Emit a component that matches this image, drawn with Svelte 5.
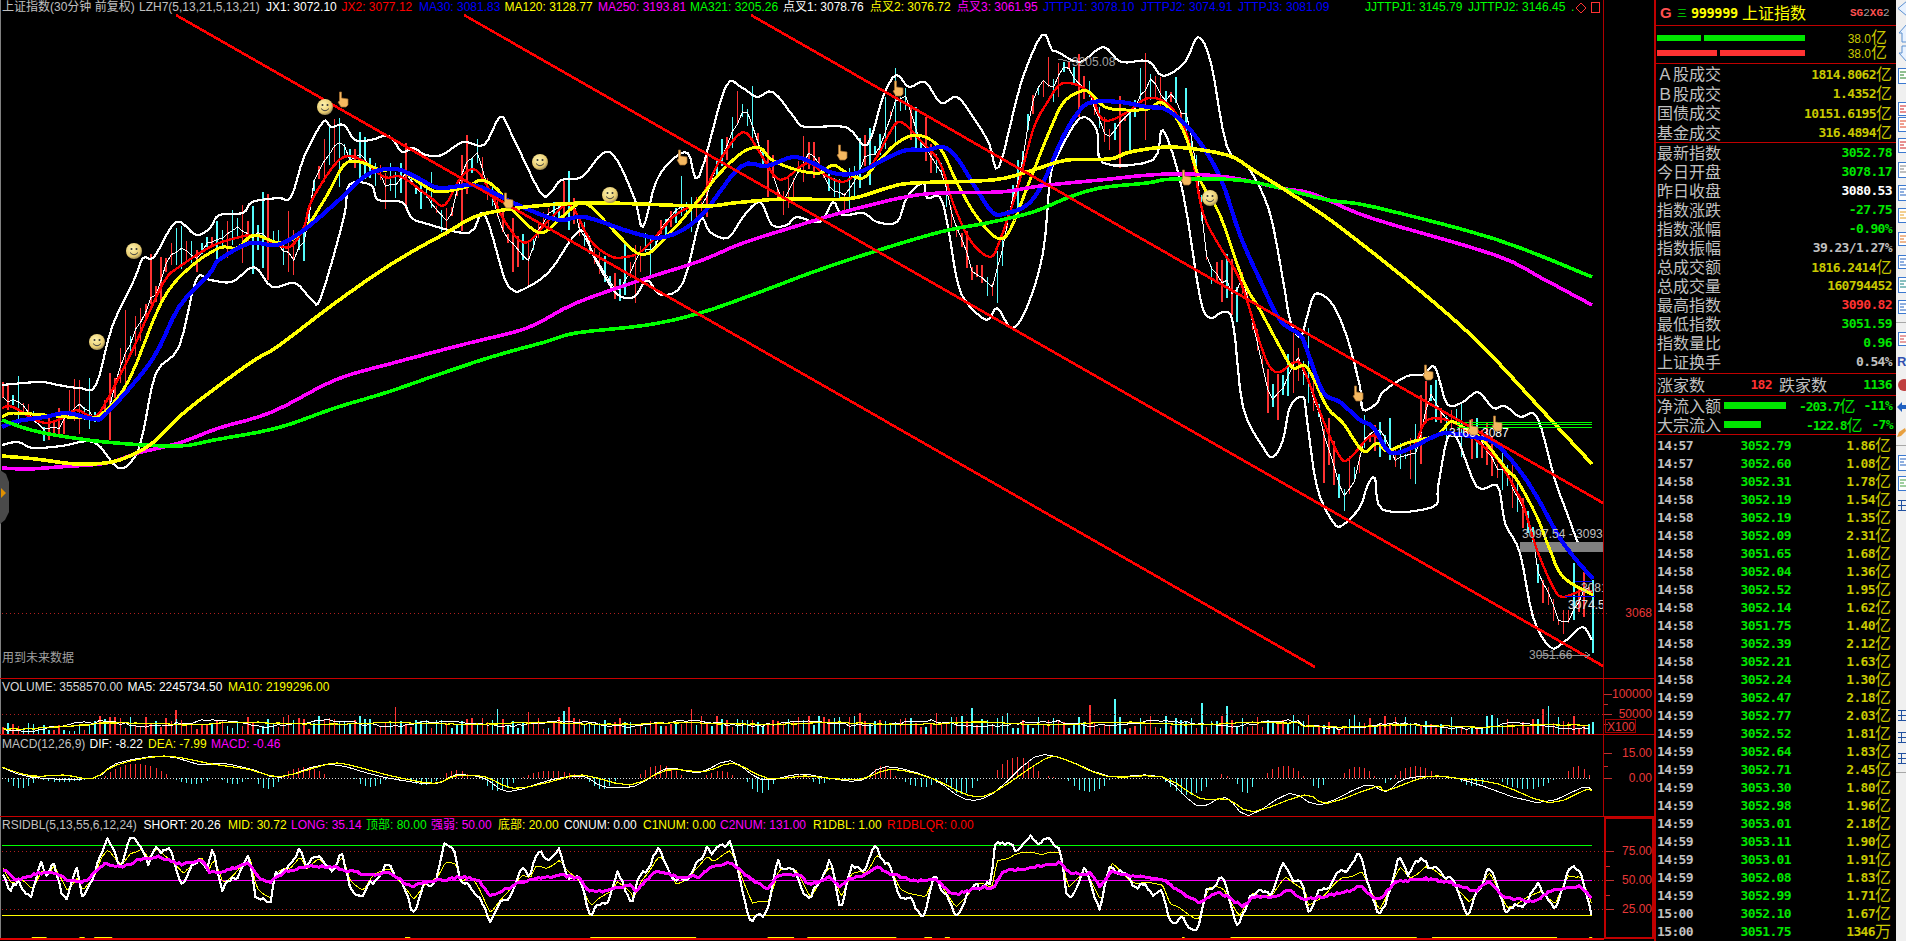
<script>
  function rng(seed) {
    let s = seed;
    return () => {
      s |= 0; s = (s + 0x6d2b79f5) | 0;
      let t = Math.imul(s ^ (s >>> 15), 1 | s);
      t = (t + Math.imul(t ^ (t >>> 7), 61 | t)) ^ t;
      return ((t ^ (t >>> 14)) >>> 0) / 4294967296;
    };
  }
  const R = rng(20240607);
  const line = (p) => p.map(([x, y]) => `${x.toFixed(1)},${y.toFixed(1)}`).join(' ');
  function smooth(pts, n = 4) {
    const out = [];
    for (let i = 0; i < pts.length - 1; i++) {
      const a = pts[Math.max(0, i - 1)], b = pts[i], c = pts[i + 1], d = pts[Math.min(pts.length - 1, i + 2)];
      for (let k = 0; k < n; k++) {
        const t = k / n, t2 = t * t, t3 = t2 * t;
        const f = (q) => 0.5 * (2 * b[q] + (c[q] - a[q]) * t + (2 * a[q] - 5 * b[q] + 4 * c[q] - d[q]) * t2 + (3 * b[q] - a[q] - 3 * c[q] + d[q]) * t3);
        out.push([f(0), f(1)]);
      }
    }
    out.push(pts[pts.length - 1]);
    return out;
  }
  function interp(pts, x) {
    if (x <= pts[0][0]) return pts[0][1];
    for (let i = 1; i < pts.length; i++) {
      if (x <= pts[i][0]) {
        const [x0, y0] = pts[i - 1], [x1, y1] = pts[i];
        return y0 + ((y1 - y0) * (x - x0)) / (x1 - x0 || 1);
      }
    }
    return pts[pts.length - 1][1];
  }

  const green = [[2,420],[31,430],[67,437],[116,443],[179,446],[214,440],[277,428],[335,408],[388,392],[437,375],[491,357],[545,342],[576,333],[647,325],[700,313],[760,292],[813,272],[873,252],[940,232],[987,223],[1033,212],[1067,198],[1100,188],[1147,183],[1173,179],[1238,180],[1280,188],[1328,200],[1374,207],[1495,239],[1592,277]];
  const magenta = [[2,468],[27,469],[58,467],[107,463],[138,453],[179,443],[219,428],[272,412],[335,380],[393,363],[469,343],[527,328],[576,303],[647,278],[700,261],[743,243],[800,225],[840,213],[900,198],[940,193],[1000,192],[1040,186],[1100,180],[1167,174],[1227,177],[1280,188],[1306,192],[1328,200],[1374,219],[1495,255],[1545,280],[1592,305]];
  const yellow = [[2,456],[36,459],[76,464],[112,462],[138,452],[156,440],[187,410],[250,363],[277,347],[335,303],[393,263],[446,233],[487,213],[580,203],[700,206],[733,203],[783,199],[847,199],[887,188],[913,183],[993,180],[1033,170],[1067,160],[1110,159],[1130,152],[1173,147],[1227,155],[1253,170],[1296,197],[1337,225],[1407,280],[1460,325],[1493,357],[1540,408],[1592,464]];
  const blue = [[2,427],[18,421],[45,417],[67,413],[94,419],[107,413],[152,360],[179,307],[210,273],[219,260],[250,243],[277,245],[304,230],[339,200],[360,180],[376,171],[397,169],[418,178],[439,188],[471,185],[492,192],[518,205],[558,220],[585,217],[634,233],[665,237],[700,217],[740,167],[767,166],[793,157],[813,163],[833,173],[857,173],[887,158],[907,150],[927,150],[943,147],[957,158],[977,190],[993,213],[1007,213],[1027,205],[1043,183],[1063,137],[1080,110],[1093,102],[1120,102],[1147,107],[1167,110],[1193,133],[1220,177],[1240,235],[1260,280],[1280,320],[1300,335],[1307,350],[1323,392],[1340,402],[1360,420],[1373,427],[1387,450],[1397,453],[1413,447],[1433,437],[1447,433],[1473,437],[1493,442],[1517,467],[1537,497],[1563,543],[1593,579]];
  const jy = [[2,417],[13,413],[45,415],[85,418],[103,413],[129,380],[161,303],[187,270],[219,248],[237,248],[254,235],[281,243],[304,230],[326,197],[344,165],[360,162],[381,170],[400,170],[423,185],[439,192],[466,187],[482,180],[498,190],[513,210],[540,233],[562,217],[585,203],[616,233],[643,255],[670,233],[700,198],[720,173],[743,152],[760,148],[772,160],[797,170],[820,173],[833,165],[847,173],[863,178],[877,163],[897,143],[918,135],[940,148],[957,183],[977,217],[997,238],[1010,230],[1030,180],[1050,130],[1063,103],[1079,92],[1089,92],[1105,107],[1126,110],[1148,109],[1163,103],[1183,130],[1200,180],[1220,215],[1243,280],[1260,310],[1280,347],[1293,368],[1307,367],[1327,407],[1343,423],[1363,451],[1377,443],[1387,451],[1407,443],[1437,435],[1450,422],[1463,427],[1483,440],[1507,470],[1517,480],[1537,517],[1550,550],[1563,577],[1593,595]];
  const jr = [[2,408],[13,407],[40,422],[58,420],[76,410],[94,417],[107,400],[134,347],[147,317],[165,280],[179,267],[210,247],[232,239],[254,235],[272,242],[290,247],[304,227],[312,200],[339,160],[360,159],[384,177],[402,177],[431,198],[445,205],[461,177],[476,170],[492,195],[504,220],[525,243],[549,220],[570,205],[590,240],[610,256],[625,257],[643,250],[670,220],[683,210],[700,200],[720,160],[743,132],[760,153],[780,180],[807,163],[825,175],[843,182],[857,173],[873,163],[893,127],[903,123],[920,140],[940,163],[953,203],[970,240],[990,257],[1000,240],[1017,190],[1033,130],[1047,103],[1063,83],[1089,92],[1103,120],[1126,113],[1148,98],[1169,105],[1185,130],[1193,160],[1203,213],[1220,247],[1240,280],[1260,343],[1270,367],[1280,372],[1293,363],[1303,368],[1323,420],[1340,457],[1350,458],[1373,435],[1390,452],[1413,447],[1427,420],[1453,422],[1473,437],[1490,453],[1500,463],[1520,498],[1527,517],[1537,550],[1553,587],[1563,597],[1583,590],[1593,592]];
  const upper = [[2,385],[40,382],[58,385],[80,388],[96,385],[112,327],[134,280],[143,258],[154,257],[176,222],[196,235],[210,228],[219,215],[243,213],[252,202],[278,198],[291,197],[304,157],[323,122],[331,127],[344,125],[355,140],[371,140],[389,136],[402,152],[413,148],[426,155],[442,155],[463,142],[484,145],[500,117],[511,133],[540,192],[551,192],[561,180],[582,177],[603,153],[617,160],[635,200],[643,227],[656,182],[672,160],[688,153],[699,177],[725,88],[741,87],[757,97],[773,92],[794,117],[805,127],[846,127],[867,145],[883,97],[896,75],[909,87],[925,82],[941,103],[957,97],[973,117],[989,143],[999,167],[1021,83],[1042,35],[1052,50],[1058,52],[1080,62],[1103,47],[1121,62],[1148,61],[1163,76],[1185,62],[1198,37],[1211,63],[1227,147],[1248,167],[1269,210],[1283,280],[1290,320],[1300,337],[1307,317],[1313,297],[1320,294],[1333,305],[1347,337],[1360,387],[1363,410],[1377,403],[1383,392],[1407,376],[1423,375],[1435,367],[1447,404],[1463,402],[1478,392],[1493,408],[1505,406],[1520,417],[1537,417],[1555,480],[1567,513],[1580,547],[1587,550],[1593,546]];
  const lower = [[2,445],[18,442],[33,448],[62,446],[94,442],[118,468],[134,458],[143,433],[156,373],[179,347],[196,280],[210,280],[232,282],[254,267],[272,287],[295,283],[312,300],[321,297],[344,217],[349,185],[371,185],[378,200],[402,202],[411,217],[424,223],[469,233],[484,213],[504,277],[513,290],[522,290],[549,272],[580,230],[594,257],[616,293],[634,297],[647,280],[661,295],[683,283],[700,220],[710,232],[728,238],[743,217],[760,202],[772,225],[787,225],[797,217],[820,222],[833,202],[842,215],[863,213],[877,222],[897,222],[907,197],[923,183],[927,198],[940,197],[948,227],[957,280],[967,303],[987,320],[997,308],[1012,328],[1027,307],[1043,253],[1050,180],[1057,157],[1080,118],[1097,130],[1103,163],[1153,160],[1163,130],[1183,193],[1200,297],[1210,318],[1223,312],[1233,323],[1243,407],[1263,447],[1273,457],[1283,440],[1290,407],[1303,397],[1307,420],[1317,487],[1333,522],[1343,525],[1360,507],[1367,487],[1375,478],[1383,510],[1433,507],[1438,487],[1447,440],[1457,438],[1477,487],[1497,485],[1503,513],[1507,528],[1520,553],[1533,617],[1550,647],[1563,643],[1582,627],[1592,640]];

  const step = 5.1;
  const xs = [];
  for (let x = 3; x <= 1593; x += step) xs.push(x);

  const thin = xs.map((x) => {
    const up = interp(upper, x), lo = interp(lower, x), mid = (up + lo) / 2, r = interp(jr, x - 3);
    const t = r + 1.3 * (r - mid) + (R() - 0.5) * 6;
    return [x, Math.min(lo - 2, Math.max(up + 2, t))];
  });
  let cRed = '', cCyan = '';
  thin.forEach(([x, c]) => {
    const up = interp(upper, x), lo = interp(lower, x);
    const h = 12 + R() * R() * 60;
    const top = Math.max(up - 8, c - h * R());
    const bot = Math.min(lo + 8, c + h * R());
    const seg = `M${x.toFixed(1)} ${top.toFixed(1)}V${bot.toFixed(1)}`;
    if (R() < 0.5) cRed += seg; else cCyan += seg;
  });
  cCyan += 'M1593 580V653';

  const trend = [[176, 15, 1315, 667], [464, 15, 1603, 666], [751, 15, 1603, 503]];

  const smileys = [[97,342],[134,251],[325,107],[540,162],[610,195],[1210,198]];
  const hands = [[343,99],[508,200],[682,157],[842,152],[898,88],[1186,177],[1358,393],[1428,372],[1473,427],[1497,423]];

  const titles = [
    [2,'上证指数(30分钟 前复权)','#c0c0c0'],[139,'LZH7(5,13,21,5,13,21)','#c0c0c0'],[266,'JX1: 3072.10','#ffffff'],[341.5,'JX2: 3077.12','#ff0000'],
    [419,'MA30: 3081.83','#0000ff'],[504.5,'MA120: 3128.77','#ffff00'],[598,'MA250: 3193.81','#ff00ff'],[690,'MA321: 3205.26','#00ff00'],
    [783,'点叉1: 3078.76','#ffffff'],[870,'点叉2: 3076.72','#ffff00'],[957,'点叉3: 3061.95','#ff00ff'],[1043,'JTTPJ1: 3078.10','#0000ff'],
    [1141,'JTTPJ2: 3074.91','#0000ff'],[1238,'JTTPJ3: 3081.09','#0000ff'],[1365,'JJTTPJ1: 3145.79','#00ff00'],[1468,'JJTTPJ2: 3146.45','#00ff00'],[1571,'.','#00ff00']
  ];

  // volume
  let vRed = '', vCyan = '';
  xs.forEach((x) => {
    let h = 5 + R() * 14;
    if (x < 95) h = 3 + R() * 10;
    if (R() < 0.05) h = 20 + R() * 8;
    const s = `M${x.toFixed(1)} 734V${(734 - h).toFixed(1)}`;
    if (R() < 0.5) vRed += s; else vCyan += s;
  });
  vRed += 'M1090 734V705M176 734V710';
  vCyan += 'M1115 734V699M1202 734V703M1593 734V722';
  const volBase = (x) => (x < 95 ? 729 - (x / 95) * 4 : x > 1300 ? 726 : 723.5);
  const vYellow = xs.map((x) => [x, volBase(x) + Math.sin(x / 23) * 1 + (R() - 0.5) * 1.2]);
  const vWhite = xs.map((x) => [x, volBase(x) + Math.sin(x / 19) * 2.5 + (R() - 0.5) * 3]);

  // macd
  const z5 = (a) => a.map(([x, y]) => [x / 1.889, 670 + y / 3]);
  const z12 = (a) => a.map(([x, y]) => [830 + x / 1.96, 670 + y / 3]);
  const dea = [...z5([[4,292],[60,318],[120,315],[175,325],[220,285],[310,258],[400,282],[470,298],[530,320],[620,282],[660,285],[740,318],[820,340],[860,318],[915,320],[970,355],[1040,335],[1100,315],[1190,345],[1260,300],[1330,305],[1385,280],[1450,325],[1520,318]]),
    ...z12([[0,325],[60,328],[120,298],[200,325],[270,375],[320,368],[420,268],[460,268],[545,320],[650,320],[725,385],[780,388],[830,425],[930,375],[975,400],[1070,350],[1090,362],[1170,320],[1230,325],[1310,342],[1410,398],[1480,360],[1493,363]])];
  const dif = [...z5([[4,292],[60,322],[175,325],[220,280],[310,258],[380,285],[420,280],[480,300],[530,322],[620,282],[720,320],[820,342],[860,315],[915,325],[960,365],[1040,330],[1100,318],[1140,350],[1200,348],[1260,295],[1320,308],[1380,272],[1440,330],[1510,312]]),
    ...z12([[0,325],[60,332],[110,290],[200,325],[265,388],[320,370],[400,262],[460,268],[545,318],[650,320],[720,408],[775,382],[820,437],[900,370],[960,405],[1050,345],[1090,365],[1130,325],[1230,325],[1385,398],[1475,352],[1493,362]])];
  const segsA = [[10,70,-10],[70,170,-4],[195,320,14],[330,400,-6],[415,470,-6],[480,530,-11],[530,620,11],[670,730,-9],[770,830,-7],[835,890,8],[910,975,-13],[985,1100,7],[1110,1165,-11],[1205,1290,13],[1330,1390,7],[1410,1465,-15],[1480,1530,3],[1530,1568,-6]].map(([a,b,c]) => [a/1.889,b/1.889,c]);
  const segsB = [[20,70,-2],[75,130,12],[140,220,-9],[225,290,-16],[320,415,21],[420,440,2],[465,550,-14],[655,750,-17],[760,780,4],[795,835,-15],[850,930,12],[940,975,-10],[1000,1070,11],[1080,1100,-5],[1105,1190,12],[1230,1290,-8],[1310,1420,-11],[1440,1490,12]].map(([a,b,c]) => [830+a/1.96,830+b/1.96,c]);
  let mRed = '', mCyan = '';
  xs.forEach((x) => {
    const s = [...segsA, ...segsB].find((g) => x >= g[0] && x <= g[1]);
    if (!s) return;
    const p = Math.pow(Math.sin((Math.PI * (x - s[0])) / (s[1] - s[0])), 0.7) * s[2];
    const d = `M${x.toFixed(1)} 778V${(778 - p).toFixed(1)}`;
    if (p > 0) mRed += d; else mCyan += d;
  });

  // rsi
  const rLong = [...z5([[4,595],[30,630],[70,610],[100,610],[130,630],[155,640],[200,580],[230,593],[270,565],[300,560],[345,585],[380,570],[395,605],[420,605],[470,580],[490,625],[510,635],[540,605],[575,590],[630,590],[650,600],[700,615],[735,605],[775,650],[810,635],[875,620],[905,630],[925,680],[945,665],[985,635],[1060,615],[1095,625],[1110,660],[1140,665],[1190,645],[1200,665],[1240,600],[1280,620],[1320,620],[1345,590],[1380,578],[1420,630],[1450,655],[1470,615],[1510,615],[1530,645]]),
    ...z12([[0,620],[20,650],[40,625],[70,615],[90,590],[115,610],[170,635],[205,625],[240,675],[300,650],[320,655],[340,605],[450,578],[470,608],[510,610],[530,650],[550,605],[600,620],[650,625],[680,660],[725,700],[760,665],[810,710],[830,680],[870,680],[900,660],[930,690],[1000,670],[1040,650],[1075,690],[1110,635],[1165,625],[1220,640],[1265,665],[1290,635],[1320,680],[1380,695],[1410,665],[1470,648],[1493,682]])];
  const rShort = [...z5([[4,590],[20,650],[35,630],[60,695],[78,580],[90,620],[100,575],[125,685],[145,605],[155,685],[175,640],[190,530],[203,500],[215,550],[228,590],[245,520],[265,510],[280,575],[295,520],[320,560],[345,640],[378,540],[390,610],[402,545],[420,670],[470,550],[482,680],[510,720],[520,600],[545,590],[565,525],[578,610],[600,550],[625,600],[645,540],[660,660],[685,695],[700,630],[735,580],[780,725],[800,640],[825,620],[840,540],[858,535],[870,640],[890,630],[925,760],[955,690],[985,590],[1000,620],[1010,565],[1030,570],[1055,530],[1070,600],[1095,640],[1115,740],[1150,670],[1165,610],[1195,710],[1210,620],[1245,525],[1275,655],[1300,625],[1335,520],[1345,555],[1378,520],[1395,600],[1420,755],[1450,730],[1470,580],[1500,590],[1530,705]]),
    ...z12([[0,565],[20,700],[40,605],[70,600],[90,520],[115,580],[135,680],[185,730],[205,600],[245,750],[285,625],[315,660],[325,515],[345,535],[395,500],[415,530],[450,520],[465,685],[500,610],[530,720],[550,565],[600,660],[650,650],[665,750],[720,785],[740,640],[770,635],[800,775],[825,655],[865,680],[890,580],[930,650],[935,730],[970,660],[1000,595],[1040,565],[1075,745],[1115,565],[1135,620],[1165,560],[1215,630],[1250,735],[1290,580],[1325,735],[1390,645],[1420,735],[1445,590],[1470,590],[1493,735]])];
  const rx = [];
  for (let x = 3; x <= 1592; x += 2.55) rx.push(x);
  const rsiWhite = rx.map((x) => {
    const base = interp(rShort, x);
    const k = Math.sin(x / 3.1) * 3 + Math.sin(x / 7.3) * 4 + (R() - 0.5) * 4;
    return [x, x > 1589 ? base : Math.min(930, base + k)];
  });
  const rsiLong = rx.map((x) => [x, interp(rLong, x) + (R() - 0.5) * 2.4]);
  const rMid = rx.map((x) => {
    const l = interp(rLong, x), s = interp(rShort, x - 1);
    return [x, l + 0.55 * (s - l) + Math.sin(x / 5.1) * 1.5];
  });
  const bottomY = [[60,88],[150,160],[178,212],[765,775],[1115,1315],[1450,1500],[1525,1568]].map(([a,b]) => [a/1.889,b/1.889])
    .concat([[0,130],[185,200],[225,235],[690,695],[785,1150],[1180,1425],[1488,1494]].map(([a,b]) => [830+a/1.96,830+b/1.96]));

  const rsiHead = [
    [2,'RSIDBL(5,13,55,6,12,24)','#c0c0c0'],[143.5,'SHORT: 20.26','#ffffff'],[228,'MID: 30.72','#ffff00'],[291,'LONG: 35.14','#ff00ff'],
    [366,'顶部: 80.00','#00ff00'],[431,'强弱: 50.00','#ff00ff'],[498,'底部: 20.00','#ffff00'],[564,'C0NUM: 0.00','#ffffff'],
    [643,'C1NUM: 0.00','#ffff00'],[720,'C2NUM: 131.00','#ff00ff'],[813,'R1DBL: 1.00','#ffff00'],[887,'R1DBLQR: 0.00','#ff0000']
  ];

  const turnover = [['Ａ股成交','1814.8062'],['Ｂ股成交','1.4352'],['国债成交','10151.6195'],['基金成交','316.4894']];
  const stats = [
    ['最新指数','3052.78','g'],['今日开盘','3078.17','g'],['昨日收盘','3080.53','w'],['指数涨跌','-27.75','g'],['指数涨幅','-0.90%','g'],['指数振幅','39.23/1.27%','n'],
    ['总成交额','1816.2414','y','亿'],['总成交量','160794452','y'],['最高指数','3090.82','r'],['最低指数','3051.59','g'],['指数量比','0.96','g'],['上证换手','0.54%','n']
  ];
  const ticks = [
    ['14:57','3052.79','1.86'],['14:57','3052.60','1.08'],['14:58','3052.31','1.78'],['14:58','3052.19','1.54'],['14:58','3052.19','1.35'],['14:58','3052.09','2.31'],['14:58','3051.65','1.68'],
    ['14:58','3052.04','1.36'],['14:58','3052.52','1.95'],['14:58','3052.14','1.62'],['14:58','3051.75','1.40'],['14:58','3052.39','2.12'],['14:58','3052.21','1.63'],['14:58','3052.24','1.30'],
    ['14:59','3052.47','2.18'],['14:59','3052.77','2.03'],['14:59','3052.52','1.81'],['14:59','3052.64','1.83'],['14:59','3052.71','2.45'],['14:59','3053.30','1.80'],['14:59','3052.98','1.96'],
    ['14:59','3053.01','2.18'],['14:59','3053.11','1.90'],['14:59','3053.01','1.91'],['14:59','3052.08','1.83'],['14:59','3052.99','1.71'],['15:00','3052.10','1.67'],['15:00','3051.75','1346','万']
  ];
  const tbBoxes = [[68,15,'#208020'],[102,13,'#d02020'],[117,14,'#e04020'],[138,14,'#d02020'],[162,15,'#808080'],[185,15,'#2060c0'],[208,14,'#e8a020'],[232,13,'#e07020'],[255,13,'#2060c0'],[277,15,'#108080'],[300,13,'#2060c0'],[332,13,'#d04040'],[455,15,'#2060c0'],[476,14,'#40a040']];
  const tbGlyphs = [505,715,737,758];
</script>

{#snippet axisV()}
  <line class="ax" x1="1603.5" y1="0" x2="1603.5" y2="941" />
  <rect class="axr" x="1654" y="0" width="2" height="941" />
{/snippet}

<div class="app">
  <div class="charts">
    <div class="pane main">
      <svg width="1656" height="678" viewBox="0 0 1656 678">
        <defs>
          <radialGradient id="smile" cx="0.4" cy="0.35" r="0.7">
            <stop offset="0" stop-color="#fff4b0" />
            <stop offset="0.7" stop-color="#e8cc70" />
            <stop offset="1" stop-color="#8a7a50" />
          </radialGradient>
          <symbol id="hand" viewBox="0 0 12 17">
            <path d="M2.5 1 L4.5 1 L4.5 7 L11 8 L11 14 L9 16 L4 16 L1 11 L2.5 10 Z" fill="#f4b860" stroke="#a87030" stroke-width="0.7" />
          </symbol>
          <clipPath id="clip-main"><rect x="0" y="0" width="1603" height="678" /></clipPath>
        </defs>

        <line class="dot" x1="2" y1="613.5" x2="1609" y2="613.5" />
        <path class="cand red" d={cRed} />
        <path class="cand cyan" d={cCyan} />
        <polyline class="l thin" points={line(thin)} />
        <polyline class="l w2" points={line(smooth(upper))} />
        <polyline class="l w2" points={line(smooth(lower))} />

        <rect x="1520" y="542" width="83" height="10" fill="#808080" />
        <polyline class="l red2" points={line(smooth(jr))} />
        <polyline class="l yel" points={line(smooth(jy))} />
        <polyline class="l blu" points={line(smooth(blue))} />
        <polyline class="l ma mag" points={line(smooth(magenta))} />
        <polyline class="l ma gre" points={line(smooth(green))} />
        <polyline class="l ma y3" points={line(smooth(yellow))} />

        <g class="greens">
          <line x1="1457" y1="422.5" x2="1592" y2="422.5" />
          <line x1="1457" y1="424.5" x2="1592" y2="424.5" />
          <line x1="1457" y1="427" x2="1592" y2="427" />
        </g>
        <text class="t" x="1449" y="437" fill="#ffffff">3166</text>
        <text class="t" x="1482" y="437" fill="#ffffff">3087</text>

        {#each trend as t}
          <line class="trend" x1={t[0]} y1={t[1]} x2={t[2]} y2={t[3]} />
        {/each}

        <line class="blue1" x1="1575" y1="581.5" x2="1592" y2="581.5" />
        <line class="blue1" x1="1565" y1="596.5" x2="1595" y2="596.5" />
        <path class="gline" d="M1058 59 L1072 62 M1537 655 H1590 M1585 652 L1590 655 L1585 658" />
        <text class="t" x="1072" y="66" fill="#a0a0a0">3205.08</text>
        <text class="t" x="1522" y="538" fill="#c0c0c0" clip-path="url(#clip-main)">3097.54 - 3093</text>
        <text class="t" x="1581" y="592" fill="#c0c0c0" clip-path="url(#clip-main)">3081</text>
        <text class="t" x="1568" y="609" fill="#e0e0e0" clip-path="url(#clip-main)">3074.5</text>
        <text class="t" x="1529" y="659" fill="#a0a0a0">3051.66</text>

        {#each smileys as s}
          <g transform={`translate(${s[0]} ${s[1]})`}>
            <circle r="8" fill="url(#smile)" />
            <circle cx="-2.5" cy="-2" r="1" fill="#333" />
            <circle cx="2.5" cy="-2" r="1" fill="#333" />
            <path d="M-4 1.5 Q0 6 4 1.5" fill="none" stroke="#444" stroke-width="1" />
          </g>
        {/each}
        {#each hands as h}
          <use href="#hand" x={h[0] - 6} y={h[1] - 8} width="12" height="17" />
        {/each}

        <rect x="0" y="0" width="1" height="678" fill="#808080" />
        {#each titles as t}
          <text class="t" x={t[0]} y="11" fill={t[2]}>{t[1]}</text>
        {/each}
        <path d="M1581 3 L1586 8 L1581 13 L1576 8 Z" fill="none" stroke="#ff3232" />
        <rect x="1591.5" y="2.5" width="8" height="10" fill="none" stroke="#ff3232" />

        <text class="t" x="2" y="662" fill="#a0a0a0">用到未来数据</text>
        <text class="ay" x="1652" y="617" text-anchor="end">3068</text>

        <path d="M0 470 L6 474 L9 482 L9 512 L5 520 L0 524 Z" fill="#4a4a4a" />
        <path d="M1 488 L6 493 L1 498 Z" fill="#e09000" />
        {@render axisV()}
      </svg>
    </div>

    <div class="pane vol">
      <svg width="1656" height="55" viewBox="0 679 1656 55">
        <rect x="0" y="679" width="1" height="55" fill="#808080" />
        <path class="cand red" d={vRed} />
        <path class="cand cyan" d={vCyan} />
        <line class="dot" x1="2" y1="714.5" x2="1609" y2="714.5" />
        <polyline class="l thin" points={line(vWhite)} />
        <polyline class="l y15" points={line(vYellow)} />
        <text class="t" x="2" y="691" fill="#d8d8d8">VOLUME: 3558570.00</text>
        <text class="t" x="127.6" y="691" fill="#ffffff">MA5: 2245734.50</text>
        <text class="t" x="228" y="691" fill="#ffff00">MA10: 2199296.00</text>
        <path class="tk" d="M1604 694.5H1612M1604 704.5H1608M1604 714.5H1612M1604 724.5H1608" />
        <text class="ay" x="1652" y="698" text-anchor="end">100000</text>
        <text class="ay" x="1652" y="718" text-anchor="end">50000</text>
        <rect class="box" x="1605.5" y="719.5" width="30" height="13" />
        <text class="ay" x="1607" y="731">X100</text>
        {@render axisV()}
      </svg>
    </div>

    <div class="pane macd">
      <svg width="1656" height="81" viewBox="0 735 1656 81">
        <rect x="0" y="735" width="1" height="81" fill="#808080" />
        <path class="bar red" d={mRed} />
        <path class="bar cyan" d={mCyan} />
        <line class="dotw" x1="2" y1="778.5" x2="1592" y2="778.5" />
        <polyline class="l thin" points={line(smooth(dif, 3))} />
        <polyline class="l y15" points={line(smooth(dea, 3))} />
        <text class="t" x="2" y="748" fill="#c0c0c0">MACD(12,26,9)</text>
        <text class="t" x="89.5" y="748" fill="#ffffff">DIF: -8.22</text>
        <text class="t" x="148" y="748" fill="#ffff00">DEA: -7.99</text>
        <text class="t" x="211" y="748" fill="#ff00ff">MACD: -0.46</text>
        <path class="tk" d="M1604 753.5H1612M1604 766.5H1608M1604 778.5H1612" />
        <text class="ay" x="1652" y="757" text-anchor="end">15.00</text>
        <text class="ay" x="1652" y="782" text-anchor="end">0.00</text>
        {@render axisV()}
      </svg>
    </div>

    <div class="pane rsi">
      <svg width="1656" height="124" viewBox="0 817 1656 124">
        <rect x="0" y="817" width="1" height="121" fill="#808080" />
        <line class="dot" x1="2" y1="851.5" x2="1609" y2="851.5" />
        <line class="dot" x1="2" y1="880.5" x2="1609" y2="880.5" />
        <line class="dot" x1="2" y1="909.5" x2="1609" y2="909.5" />
        <line class="flat g" x1="2" y1="845.5" x2="1592" y2="845.5" />
        <line class="flat m" x1="2" y1="880.5" x2="1592" y2="880.5" />
        <line class="flat y" x1="2" y1="915.5" x2="1592" y2="915.5" />
        <polyline class="l thiny" points={line(rMid)} />
        <polyline class="l w2" points={line(rsiWhite)} />
        <polyline class="l mag25" points={line(rsiLong)} />
        {#each rsiHead as t}
          <text class="t" x={t[0]} y="829" fill={t[2]}>{t[1]}</text>
        {/each}
        {#each bottomY as b}
          <rect x={b[0]} y="937" width={b[1] - b[0]} height="1" fill="#ffff00" />
        {/each}
        <rect x="0" y="938" width="1604" height="2" fill="#e00000" />
        <rect x="1605" y="818" width="48" height="120" class="thick" />
        <path class="tk" d="M1606 851.5H1614M1606 866.5H1610M1606 880.5H1614M1606 895.5H1610M1606 909.5H1614" />
        <text class="ay" x="1652" y="855" text-anchor="end">75.00</text>
        <text class="ay" x="1652" y="884" text-anchor="end">50.00</text>
        <text class="ay" x="1652" y="913" text-anchor="end">25.00</text>
        <rect class="axr" x="1654" y="817" width="2" height="124" />
      </svg>
    </div>
  </div>

  <aside class="panel">
    <header class="sec head">
      <span class="g">G</span>
      <span class="san">三</span>
      <span class="code">999999</span>
      <span class="name">上证指数</span>
      <span class="sg"><b>SG</b><i>2</i><b>XG</b><i>2</i></span>
    </header>

    <section class="sec bars">
      <div class="barrow">
        <span class="bb gb b1"></span><span class="bb gb b2"></span>
        <span class="amt">38.0<em>亿</em></span>
      </div>
      <div class="barrow">
        <span class="bb rb b3"></span><span class="bb rb b4"></span>
        <span class="amt">38.0<em>亿</em></span>
      </div>
    </section>

    <section class="sec turn">
      {#each turnover as r}
        <div class="row r195"><span class="lab">{r[0]}</span><span class="val y">{r[1]}<em>亿</em></span></div>
      {/each}
    </section>

    <section class="sec stat">
      {#each stats as r}
        <div class="row r19">
          <span class="lab">{r[0]}</span>
          <span class="val {r[2]}">{r[1]}{#if r[3]}<em>{r[3]}</em>{/if}</span>
        </div>
      {/each}
    </section>

    <section class="sec counts">
      <span class="lab">涨家数</span>
      <span class="val r c182">182</span>
      <span class="lab c2">跌家数</span>
      <span class="val g c1136">1136</span>
    </section>

    <section class="sec flow">
      <div class="row r19">
        <span class="lab">净流入额</span>
        <span class="fb fb1"></span>
        <span class="val g fv fv1">-203.7<em>亿</em></span>
        <span class="val g fp1">-11%</span>
      </div>
      <div class="row r19">
        <span class="lab">大宗流入</span>
        <span class="fb fb2"></span>
        <span class="val g fv fv2">-122.8<em>亿</em></span>
        <span class="val g fp2">-7%</span>
      </div>
    </section>

    <section class="ticks">
      {#each ticks as t}
        <div class="tick">
          <span class="val n">{t[0]}</span>
          <span class="val g">{t[1]}</span>
          <span class="val y">{t[2]}<em>{t[3] ?? '亿'}</em></span>
        </div>
      {/each}
    </section>
  </aside>

  <div class="toolbar">
    <svg width="10" height="941" viewBox="0 0 10 941">
      <path class="ti" d="M11 1 L2 8.5 L11 16" />
      <path class="ti" d="M11 24 L3 33 H6 V42 H11" />
      <path class="ti" d="M11 62 L3 53 H6 V46 H11" />
      {#each tbBoxes as b}
        <rect class="tb" x="2.5" y={b[0] + 0.5} width="14" height={b[1]} />
        <path d={`M4 ${b[0] + 4}H10M4 ${b[0] + 7}H8M4 ${b[0] + 10}H10`} stroke={b[2]} fill="none" />
      {/each}
      {#each tbGlyphs as g}
        <path class="tg" d={`M2 ${g - 5}H10M5 ${g - 5}V${g + 5}M2 ${g}H10M2 ${g + 5}H10`} />
      {/each}
      <line class="sep" x1="0" y1="322.5" x2="10" y2="322.5" />
      <line class="sep" x1="0" y1="445.5" x2="10" y2="445.5" />
      <line class="sep" x1="0" y1="772.5" x2="10" y2="772.5" />
      <text class="tr" x="1" y="366">R</text>
      <circle cx="8" cy="385" r="6" fill="#c04040" />
      <path d="M1 407 L6 402 V405 H10 V409 H6 V412 Z" fill="#2060c0" />
      <path d="M1 437 L3 432 L9 428 L10 431 L5 436 Z" fill="#e8a040" />
    </svg>
  </div>
</div>

<style>
  :global(body) { margin: 0; background: #000; }
  .app { display: flex; width: 1906px; height: 941px; overflow: hidden; background: #000; }
  .charts { width: 1656px; flex: none; display: flex; flex-direction: column; }
  .pane { border-bottom: 1px solid #c80000; box-sizing: border-box; flex: none; }
  .pane svg { display: block; }
  .main { height: 679px; }
  .vol { height: 56px; }
  .macd { height: 82px; }
  .rsi { height: 124px; border-bottom: 0; }

  .t { font: 12px "Liberation Sans", "Noto Sans CJK SC", sans-serif; }
  .ay { font: 12px "Liberation Sans", sans-serif; fill: #e83838; }
  .l { fill: none; shape-rendering: crispEdges; stroke-linejoin: round; }
  .thin { stroke: #ffffff; stroke-width: 1; }
  .thiny { stroke: #ffff00; stroke-width: 1; }
  .w2 { stroke: #ffffff; stroke-width: 2.2; }
  .red2 { stroke: #ff0000; stroke-width: 2.4; }
  .yel { stroke: #ffff00; stroke-width: 3; }
  .blu { stroke: #0000ff; stroke-width: 4.2; }
  .ma { stroke-width: 3.6; }
  .mag { stroke: #ff00ff; }
  .gre { stroke: #00ff00; }
  .y3 { stroke: #ffff00; }
  .y15 { stroke: #ffff00; stroke-width: 1.2; }
  .mag25 { stroke: #ff00ff; stroke-width: 3; }
  .cand { fill: none; stroke-width: 1.5; shape-rendering: crispEdges; }
  .bar { fill: none; stroke-width: 1; shape-rendering: crispEdges; }
  .red { stroke: #ff3232; }
  .cyan { stroke: #54fcfc; }
  .dot { stroke: #b02020; stroke-dasharray: 1 3; stroke-width: 1; shape-rendering: crispEdges; }
  .dotw { stroke: #e0e0e0; stroke-dasharray: 1 2; stroke-width: 1; shape-rendering: crispEdges; }
  .flat { stroke-width: 1; shape-rendering: crispEdges; }
  .flat.g { stroke: #00ff00; }
  .flat.m { stroke: #ff00ff; }
  .flat.y { stroke: #ffff00; }
  .greens line { stroke: #00ff00; stroke-width: 1; shape-rendering: crispEdges; }
  .trend { stroke: #ff0000; stroke-width: 2.6; shape-rendering: crispEdges; }
  .blue1 { stroke: #0000ff; stroke-width: 1; shape-rendering: crispEdges; }
  .gline { fill: none; stroke: #909090; stroke-width: 1; shape-rendering: crispEdges; }
  .ax { stroke: #b00000; stroke-width: 1; shape-rendering: crispEdges; }
  .axr { fill: #c00000; }
  .tk { stroke: #c03030; stroke-width: 1; fill: none; shape-rendering: crispEdges; }
  .box { fill: none; stroke: #a00000; stroke-width: 1; shape-rendering: crispEdges; }
  .thick { fill: none; stroke: #c00000; stroke-width: 2; shape-rendering: crispEdges; }

  .panel { width: 240px; flex: none; background: #000; font: 16px "Noto Sans CJK SC", sans-serif; color: #c0c0c0; box-sizing: border-box; }
  .sec { border-bottom: 1px solid #c00000; box-sizing: border-box; padding: 0 4px 0 1px; }
  .head { height: 26px; display: flex; align-items: center; line-height: 25px; padding-left: 4px; }
  .g { color: #00e600; }
  .head .g { color: #ff5050; font: bold 15px "Liberation Sans", sans-serif; width: 17px; }
  .san { color: #00e000; font-size: 10px; width: 14px; }
  .code { color: #ffff00; font: bold 13.6px "DejaVu Sans Mono", monospace; letter-spacing: -0.4px; width: 51px; }
  .name { color: #ffff00; font-size: 16px; width: 108px; }
  .sg { font: bold 11px "Liberation Mono", monospace; color: #ff5050; white-space: nowrap; }
  .sg b { font-weight: bold; }
  .sg i { font-style: normal; font-weight: normal; color: #a0a0a0; }

  .bars { height: 38px; display: flex; flex-direction: column; padding-top: 4px; }
  .barrow { display: flex; height: 15px; align-items: center; flex: none; }
  .bb { height: 6px; display: block; flex: none; }
  .gb { background: #00e600; }
  .rb { background: #ff3232; }
  .b1 { width: 44px; }
  .b2 { width: 101px; margin-left: 3px; }
  .b3 { width: 60px; }
  .b4 { width: 85px; margin-left: 3px; }
  .amt { color: #c8c800; font: 12px/15px "Liberation Sans", sans-serif; margin-left: auto; margin-right: 5px; white-space: nowrap; }
  .amt em { font: normal 16px/15px "Noto Sans CJK SC", sans-serif; color: #c8c800; }

  .row { display: flex; justify-content: space-between; align-items: center; white-space: nowrap; }
  .r195 { height: 19.5px; }
  .r19 { height: 19px; }
  .lab { line-height: 19px; color: #c0c0c0; }
  .val { font: bold 13px/15px "DejaVu Sans Mono", monospace; letter-spacing: -0.63px; white-space: nowrap; }
  .val em { font: normal 16px/15px "Noto Sans CJK SC", sans-serif; letter-spacing: 0; vertical-align: -1px; }
  .val.y { color: #c8c800; }
  .val.g { color: #00e600; }
  .val.r { color: #ff3232; }
  .val.w { color: #ffffff; }
  .val.n { color: #c0c0c0; }

  .turn { height: 79px; }
  .stat { height: 231px; }
  .counts { height: 22px; display: flex; align-items: center; }
  .c182 { width: 67px; text-align: right; }
  .c2 { margin-left: 7px; }
  .c1136 { margin-left: auto; }

  .flow { height: 39px; }
  .flow .row { justify-content: flex-start; }
  .fb { height: 7px; background: #00e600; margin-left: 3px; flex: none; }
  .fb1 { width: 62px; }
  .fb2 { width: 37px; }
  .fv { letter-spacing: -1.1px; }
  .fv1 { margin-left: 13px; }
  .fv2 { margin-left: 45px; }
  .fp1 { margin-left: 8px; }
  .fp2 { margin-left: 9px; }

  .ticks { padding: 1px 5px 0 1px; }
  .tick { display: grid; grid-template-columns: 35px 99px 1fr; height: 18px; align-items: center; white-space: nowrap; }
  .tick .val:nth-child(2), .tick .val:nth-child(3) { text-align: right; }

  .toolbar { flex: 1; background: #f0f0f0; }
  .toolbar svg { display: block; }
  .ti { fill: #e8f2ff; stroke: #5b8fd0; stroke-width: 1; }
  .tb { fill: #ffffff; stroke: #3a78d0; stroke-width: 1; shape-rendering: crispEdges; }
  .tg { fill: none; stroke: #2050a0; stroke-width: 1; shape-rendering: crispEdges; }
  .sep { stroke: #a8a8a8; stroke-width: 1; shape-rendering: crispEdges; }
  .tr { font: bold 13px "Liberation Sans", sans-serif; fill: #3050b0; }
</style>
